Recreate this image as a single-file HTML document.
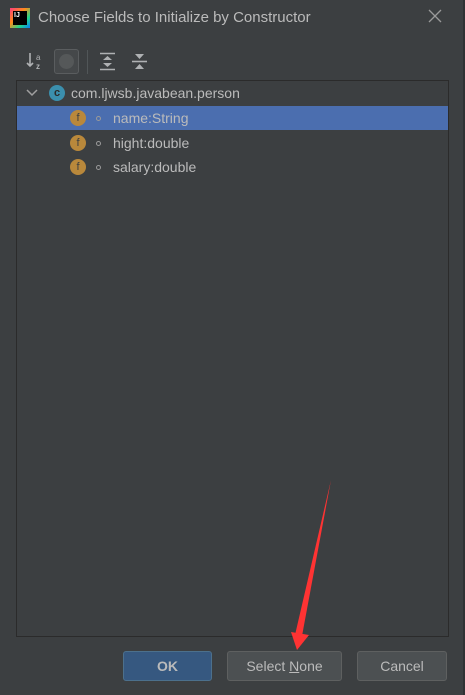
<!DOCTYPE html>
<html><head><style>
body{margin:0;width:465px;height:695px;background:#3c3f41;position:relative;overflow:hidden;font-family:"Liberation Sans",sans-serif;color:#bbbbbb}
.a{position:absolute}
.panel{left:16px;top:80px;width:431px;height:555px;border:1px solid #2b2b2b;background:#3c3f41}
.row{position:absolute;left:0;width:431px;height:24px;font-size:14px;line-height:24px}
.f{position:absolute;left:53px;top:4px;width:16px;height:16px;border-radius:50%;background:#b9883b;color:#3c3f41;font-size:11px;line-height:16px;text-align:center}
.dot{position:absolute;left:79px;top:10px;width:3px;height:3px;border:1.5px solid #9a9a9a;border-radius:50%}
.t{position:absolute;left:96px;top:0}
.btn{position:absolute;top:651px;height:28px;border:1px solid #5e6060;border-radius:3px;background:#4c5052;font-size:14px;line-height:28px;text-align:center;color:#bbbbbb}
</style></head><body>
<div class="a" style="left:10px;top:8px;width:20px;height:20px;background:linear-gradient(135deg,#fc3e7e,#fe8c1a 40%,#21d789 70%,#087cfa)"></div>
<div class="a" style="left:13px;top:11px;width:14px;height:14px;background:#000;color:#fff;font-size:7px;font-weight:bold;line-height:9px;padding-left:1px;box-sizing:border-box">IJ</div>
<div class="a" style="left:38px;top:9px;font-size:15px;color:#bbbbbb">Choose Fields to Initialize by Constructor</div>
<svg class="a" style="left:428px;top:9px" width="14" height="14"><path d="M1 1L13 13M13 1L1 13" stroke="#9a9a9a" stroke-width="1.3"/></svg>
<div class="a" style="left:463px;top:0;width:2px;height:695px;background:#2f3133"></div>
<svg class="a" style="left:25px;top:51px" width="20" height="20"><path d="M5 2V15M2 12L5 15L8 12" stroke="#afb1b3" stroke-width="1.6" fill="none"/><text x="11" y="9" font-size="8" fill="#afb1b3" font-family="Liberation Sans">a</text><text x="11" y="18" font-size="8" fill="#afb1b3" font-family="Liberation Sans" font-weight="bold">z</text></svg>
<div class="a" style="left:54px;top:49px;width:25px;height:25px;border:1px solid #5a5d5f;border-radius:3px;background:#45484a;box-sizing:border-box"></div>
<div class="a" style="left:59px;top:54px;width:15px;height:15px;border-radius:50%;background:#555859"></div>
<div class="a" style="left:87px;top:50px;width:1px;height:24px;background:#515658"></div>
<svg class="a" style="left:99px;top:52px" width="18" height="20"><path d="M1 1.5H16M1 17.5H16" stroke="#afb1b3" stroke-width="1.6"/><path d="M4 8L8.5 4L13 8ZM4 11L8.5 15L13 11Z" fill="#afb1b3"/></svg>
<svg class="a" style="left:131px;top:52px" width="18" height="20"><path d="M1 9.5H16" stroke="#afb1b3" stroke-width="1.6"/><path d="M4 2L8.5 7L13 2ZM4 17L8.5 12L13 17Z" fill="#afb1b3"/></svg>
<div class="a panel">
 <div class="row" style="top:0">
  <svg class="a" style="left:9px;top:8px" width="12" height="8"><path d="M1 1L6 6L11 1" stroke="#a0a0a0" stroke-width="1.5" fill="none"/></svg>
  <div class="a" style="left:32px;top:4px;width:16px;height:16px;border-radius:50%;background:#3b8fad;color:#2b2b2b;font-size:11px;line-height:16px;text-align:center;font-weight:bold">c</div>
  <div class="t" style="left:54px">com.ljwsb.javabean.person</div>
 </div>
 <div class="row" style="top:25px;background:#4b6eaf"><div class="f">f</div><div class="dot"></div><div class="t">name:String</div></div>
 <div class="row" style="top:50px"><div class="f">f</div><div class="dot"></div><div class="t">hight:double</div></div>
 <div class="row" style="top:74px"><div class="f">f</div><div class="dot"></div><div class="t">salary:double</div></div>
</div>
<div class="btn" style="left:123px;width:87px;background:#365880;border-color:#4c708c;font-weight:bold">OK</div>
<div class="btn" style="left:227px;width:113px">Select <u>N</u>one</div>
<div class="btn" style="left:357px;width:88px">Cancel</div>
<svg class="a" style="left:0;top:0" width="465" height="695"><path d="M331 480L302 636L295 635Z" fill="#f33"/><path d="M291 632L309 635L297 650Z" fill="#f33"/></svg>
</body></html>
